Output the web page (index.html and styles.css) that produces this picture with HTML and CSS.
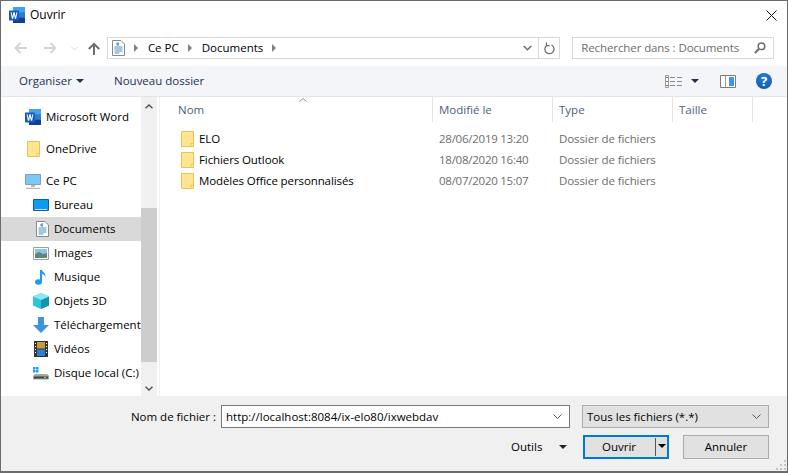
FILE: index.html
```html
<!doctype html>
<html lang="fr">
<head>
<meta charset="utf-8">
<title>Ouvrir</title>
<link rel="stylesheet" href="styles.css">
</head>
<body>

<svg class="sprites" width="0" height="0">
  <symbol id="folder" viewBox="0 0 13 16">
    <path d="M.5 .5h12v15H.5z" fill="#ffe591" stroke="#eac352"/>
    <path d="M10 15.500v-3h2.500" fill="#fff6cf" stroke="#eac352"/>
  </symbol>
  <symbol id="word" viewBox="0 0 16 16">
    <path d="M4 0h12v16H4z" fill="#2b7cd3"/>
    <path d="M4 0h12v5.300H4z" fill="#41a5ee"/>
    <path d="M4 10.700h12V16H4z" fill="#103f91"/>
    <path d="M0 3.500h10v10H0z" fill="#185abd"/>
    <path d="M1.600 5.300l1.300 6.400h1.200L5 8l.9 3.700h1.200l1.300-6.400h-1l-.8 4.200-.9-4.200H4.300l-.9 4.200-.8-4.200z" fill="#fff"/>
  </symbol>
  <symbol id="doc" viewBox="0 0 13 16">
    <path d="M.5 .5h8.500l3.500 3.500v11.500H.5z" fill="#fff" stroke="#8a8a8a"/>
    <path d="M2.500 7h8M2.500 9h8M2.500 11h8M2.500 13h5" stroke="#4a8fc4"/>
    <path d="M6 2v4M4 4h3" stroke="#2f7fd0"/>
  </symbol>
</svg>

<div class="dialog">

  <header class="titlebar">
    <svg class="title-icon" width="16" height="16"><use href="#word"/></svg>
    <span class="title-text">Ouvrir</span>
    <svg class="close" width="11" height="11" viewBox="0 0 11 11"><path d="M.5 .5l10 10M10.500 .5l-10 10" stroke="#111" fill="none"/></svg>
  </header>

  <div class="navbar">
    <div class="nav-buttons">
      <svg width="13" height="12" viewBox="0 0 13 12"><path d="M13 6H2M6.500 1L1.500 6l5 5" stroke="#d4d4d4" stroke-width="1.800" fill="none"/></svg>
      <svg width="13" height="12" viewBox="0 0 13 12"><path d="M0 6h11M6.500 1l5 5-5 5" stroke="#d4d4d4" stroke-width="1.800" fill="none"/></svg>
      <svg width="7" height="5" viewBox="0 0 7 5"><path d="M.5 1l3 3 3-3" stroke="#d4d4d4" fill="none"/></svg>
      <svg width="12" height="13" viewBox="0 0 12 13"><path d="M6 13V2M.8 7L6 1.800 11.200 7" stroke="#6d6d6d" stroke-width="2" fill="none"/></svg>
    </div>
    <div class="address">
      <svg width="13" height="16" class="address-icon"><use href="#doc"/></svg>
      <span class="crumb-sep"></span>
      <span class="crumb">Ce PC</span>
      <span class="crumb-sep"></span>
      <span class="crumb">Documents</span>
      <span class="crumb-sep"></span>
      <svg class="address-drop" width="9" height="6" viewBox="0 0 9 6"><path d="M.7 1l3.800 3.800L8.300 1" stroke="#6d6d6d" stroke-width="1.500" fill="none"/></svg>
      <span class="address-refresh">
        <svg width="11" height="13" viewBox="0 0 11 13"><path d="M3 3.200a4.600 4.600 0 1 0 4.500-.2M2.500 .5v3.200h3.200" stroke="#6d6d6d" stroke-width="1.300" fill="none"/></svg>
      </span>
    </div>
    <div class="search">
      <span>Rechercher dans : Documents</span>
      <svg width="12" height="12" viewBox="0 0 12 12"><circle cx="7.500" cy="4.300" r="3.300" stroke="#6d6d6d" stroke-width="1.500" fill="none"/><path d="M5 6.800L1 11" stroke="#6d6d6d" stroke-width="2"/></svg>
    </div>
  </div>

  <div class="toolbar">
    <span class="tool organise">Organiser</span>
    <span class="caret"></span>
    <span class="tool new-folder">Nouveau dossier</span>
    <svg class="view-icon" width="17" height="13" viewBox="0 0 17 13">
      <path d="M.5 .5h3v12h-3z" fill="#fff" stroke="#9a9a9a"/>
      <path d="M1 2h2v1H1z" fill="#3a7fc0"/><path d="M1 6h2v1H1z" fill="#6a9a50"/><path d="M1 10h2v1H1z" fill="#d05040"/>
      <path d="M5 2.500h5M12 2.500h5M5 6.500h5M12 6.500h5M5 10.500h5M12 10.500h5" stroke="#8b8b8b"/>
    </svg>
    <span class="caret view-caret"></span>
    <svg class="pane-icon" width="16" height="13" viewBox="0 0 16 13">
      <path d="M.5 .5h15v12H.5z" fill="#fff" stroke="#7b7b7b"/>
      <path d="M9 2h5v9H9z" fill="#3b98e6"/>
      <path d="M5.500 1v11" stroke="#9a9a9a"/>
    </svg>
    <span class="help">?</span>
  </div>

  <div class="body">
    <nav class="sidebar">
      <div class="side-row top">
        <svg width="16" height="16"><use href="#word"/></svg>Microsoft Word
      </div>
      <div class="side-row top gap">
        <svg class="icon-folder" width="13" height="16"><use href="#folder"/></svg>OneDrive
      </div>
      <div class="side-row top gap">
        <svg width="16" height="15" viewBox="0 0 16 15"><path d="M.5 .5h15v10H.5z" fill="#7cc8f8" stroke="#8a9aa8"/><path d="M6 11h4v2H6z" fill="#b0b8c0"/><path d="M1 14.300h14" stroke="#a0a8b0"/></svg>Ce PC
      </div>
      <div class="side-row sub">
        <svg width="16" height="12" viewBox="0 0 16 12"><path d="M.5 .5h15v11H.5z" fill="#0e9af0" stroke="#0a5fa8"/><path d="M2 10.500h12" stroke="#bfe6fb"/></svg>Bureau
      </div>
      <div class="side-row sub current">
        <svg class="icon-doc" width="13" height="16"><use href="#doc"/></svg>Documents
      </div>
      <div class="side-row sub">
        <svg width="16" height="13" viewBox="0 0 16 13"><path d="M.5 .5h15v12H.5z" fill="#fff" stroke="#9aa0a8"/><path d="M2 2h12v5H2z" fill="#8cc4ee"/><path d="M2 7l4-2 4 2 4-1v5H2z" fill="#5c8a78"/></svg>Images
      </div>
      <div class="side-row sub">
        <svg width="16" height="16" viewBox="0 0 16 16"><path d="M8 1v12" stroke="#1c9cf0" stroke-width="2" fill="none"/><ellipse cx="5.500" cy="13" rx="3.500" ry="2.800" fill="#1c9cf0"/><path d="M8.500 0c.5 3 4.500 3.500 4 8-.8-2-2.500-3.300-4-3.300z" fill="#1c9cf0"/></svg>Musique
      </div>
      <div class="side-row sub">
        <svg width="16" height="16" viewBox="0 0 16 16"><path d="M8 0l8 3.500v9L8 16l-8-3.500v-9z" fill="#2fc5d8"/><path d="M8 7l8-3.500v9L8 16z" fill="#0f96ae"/><path d="M8 0l8 3.500L8 7 0 3.500z" fill="#8ae6ef"/></svg>Objets 3D
      </div>
      <div class="side-row sub">
        <svg width="16" height="16" viewBox="0 0 16 16"><path d="M5 0h6v8h5l-8 8-8-8h5z" fill="#3c94e0"/></svg>Téléchargement
      </div>
      <div class="side-row sub">
        <svg class="icon-video" width="14" height="16" viewBox="0 0 14 16"><path d="M0 0h14v16H0z" fill="#333"/><path d="M3 1h8v6.500H3z" fill="#c79a3a"/><path d="M3 8.500h8V15H3z" fill="#2f7fd0"/><path d="M1 2h1v1H1zM1 5h1v1H1zM1 8h1v1H1zM1 11h1v1H1zM12 2h1v1h-1zM12 5h1v1h-1zM12 8h1v1h-1zM12 11h1v1h-1z" fill="#fff"/></svg>Vidéos
      </div>
      <div class="side-row sub">
        <svg width="16" height="13" viewBox="0 0 16 13"><path d="M0 0h2.500v2.500H0zM3 0h2.500v2.500H3zM0 3h2.500v2.500H0zM3 3h2.500v2.500H3z" fill="#1ba1e2"/><path d="M2 7h12l2 2v3.500H0V9z" fill="#a2a7ab"/><path d="M1 9.500h14v2H1z" fill="#3c4146"/><path d="M11 10h2v1h-2z" fill="#7de04a"/></svg>Disque local (C:)
      </div>
    </nav>

    <div class="side-scroll">
      <svg width="8" height="5" viewBox="0 0 8 5"><path d="M.5 4.300L4 1l3.500 3.300" stroke="#555" stroke-width="1.500" fill="none"/></svg>
      <div class="thumb"></div>
      <svg class="scroll-down" width="8" height="5" viewBox="0 0 8 5"><path d="M.5 .7L4 4l3.500-3.300" stroke="#555" stroke-width="1.500" fill="none"/></svg>
    </div>

    <main class="files">
      <div class="file-head">
        <svg class="sort-mark" width="8" height="4" viewBox="0 0 8 4"><path d="M.5 3.500l3.500-3 3.500 3" stroke="#8a8a8a" fill="none"/></svg>
        <div class="col col-name">Nom</div>
        <div class="col col-date">Modifié le</div>
        <div class="col col-type">Type</div>
        <div class="col col-size">Taille</div>
      </div>
      <div class="file-row">
        <div class="col-name file-name"><svg width="13" height="16"><use href="#folder"/></svg>ELO</div>
        <div class="col-date file-meta file-date">28/06/2019 13:20</div>
        <div class="col-type file-meta">Dossier de fichiers</div>
      </div>
      <div class="file-row">
        <div class="col-name file-name"><svg width="13" height="16"><use href="#folder"/></svg>Fichiers Outlook</div>
        <div class="col-date file-meta file-date">18/08/2020 16:40</div>
        <div class="col-type file-meta">Dossier de fichiers</div>
      </div>
      <div class="file-row">
        <div class="col-name file-name"><svg width="13" height="16"><use href="#folder"/></svg>Modèles Office personnalisés</div>
        <div class="col-date file-meta file-date">08/07/2020 15:07</div>
        <div class="col-type file-meta">Dossier de fichiers</div>
      </div>
    </main>
  </div>

  <footer class="footer">
    <div class="foot-row">
      <label class="name-label">Nom de fichier :</label>
      <div class="name-input">
        <span>http://localhost:8084/ix-elo80/ixwebdav</span>
        <svg width="9" height="5" viewBox="0 0 9 5"><path d="M.5 .5l4 4 4-4" stroke="#555" fill="none"/></svg>
      </div>
      <div class="type-select">
        <span>Tous les fichiers (*.*)</span>
        <svg width="9" height="5" viewBox="0 0 9 5"><path d="M.5 .5l4 4 4-4" stroke="#555" fill="none"/></svg>
      </div>
    </div>
    <div class="foot-row buttons">
      <span class="tools-label">Outils</span>
      <span class="caret tools-caret"></span>
      <div class="btn btn-open"><span class="btn-open-text">Ouvrir</span><span class="split"></span><span class="caret open-caret"></span></div>
      <div class="btn btn-cancel">Annuler</div>
    </div>
    <svg class="grip" width="10" height="10" viewBox="0 0 10 10"><path d="M8 0h2v2H8zM4 4h2v2H4zM8 4h2v2H8zM0 8h2v2H0zM4 8h2v2H4zM8 8h2v2H8z" fill="#c4c4c4"/></svg>
  </footer>

</div>

</body>
</html>
```

FILE: styles.css
```css
/* ---------- page ---------- */
html,body{margin:0;height:100%}
body{font:11.5px/16px "Open Sans","Noto Sans",sans-serif;color:#000;background:#fff;overflow:hidden}
.sprites{position:absolute}
svg{display:block;flex:none}

.dialog{
  box-sizing:border-box;
  width:788px;height:473px;
  display:flex;flex-direction:column;
  border:1px solid #6b6b6b;
  border-width:1px 1px 2px 1px;
}

/* ---------- title ---------- */
.titlebar{display:flex;align-items:center;height:29px;box-sizing:border-box;padding:0 10px 1px 8px;flex:none}
.title-text{margin-left:5px;font-size:12px}
.close{margin-left:auto}

/* ---------- address row ---------- */
.navbar{display:flex;align-items:center;height:36px;flex:none;padding:0 13px 0 13px}
.nav-buttons{display:flex;align-items:center;width:93px}
.nav-buttons svg:nth-child(2){margin-left:17px}
.nav-buttons svg:nth-child(3){margin-left:14px}
.nav-buttons svg:nth-child(4){margin-left:10px}
.address,.search{
  box-sizing:border-box;height:22px;
  display:flex;align-items:center;
  border:1px solid #d9d9d9;
}
.address{width:454px;padding-left:4px}
.crumb-sep{
  width:0;height:0;margin:0 10px 0 9px;
  border-left:4px solid #7f7f7f;
  border-top:4px solid transparent;border-bottom:4px solid transparent;
}
.address-drop{margin-left:auto;margin-right:6px}
.address-refresh{
  display:flex;align-items:center;justify-content:center;
  width:20px;height:20px;border-left:1px solid #d9d9d9;
}
.search{width:202px;margin-left:12px;padding:0 7px 0 8px;justify-content:space-between;color:#6d6d6d;letter-spacing:-.1px}

/* ---------- toolbar ---------- */
.toolbar{
  display:flex;align-items:center;flex:none;
  height:30px;padding:0 15px 0 18px;
  background:#f3f5f8;color:#1e3150;
}
.caret{
  display:inline-block;width:0;height:0;
  border-top:4px solid #1e3150;
  border-left:4px solid transparent;border-right:4px solid transparent;
}
.organise{width:57px}
.new-folder{margin-left:30px}
.view-icon{margin-left:auto}
.view-caret{margin-left:9px}
.pane-icon{margin-left:21px}
.help{
  width:16px;height:16px;margin-left:20px;border-radius:50%;
  background:radial-gradient(circle at 50% 30%,#2a7fd6,#0c56a8);color:#fff;
  font:bold 13px/16px "Open Sans",sans-serif;text-align:center;
}

/* ---------- body ---------- */
.body{display:flex;flex:1;min-height:0;border-top:1px solid #e5e5e5}

.sidebar{width:140px;flex:none;padding-top:8px;overflow:hidden;white-space:nowrap}
.side-row{display:flex;align-items:center;height:24px}
.side-row.top{padding-left:24px}
.side-row.top svg{margin-right:5px}
.side-row.top .icon-folder{margin-left:2px;margin-right:6px}
.side-row.gap{margin-top:8px}
.side-row.sub{padding-left:32px}
.side-row.sub svg{margin-right:5px}
.side-row.current{background:#d9d9d9}
.side-row.sub .icon-doc{margin-left:3px}
.side-row.sub .icon-video{margin-left:1px;margin-right:6px}

.side-scroll{
  width:16px;flex:none;box-sizing:border-box;
  display:flex;flex-direction:column;align-items:center;
  background:#f0f0f0;padding:7px 0 5px;
  margin-right:2px;
}
.thumb{width:100%;height:154px;margin-top:99px;background:#cdcdcd}
.scroll-down{margin-top:auto}

.files{flex:1;border-left:1px solid #f0f0f0;position:relative}
.file-head{display:flex;height:25px;margin-bottom:6px}
.sort-mark{position:absolute;left:139px;top:1px}
.col{display:flex;align-items:center;color:#4c607a;border-right:1px solid #e5e5e5;box-sizing:border-box;padding-left:6px}
.col-name{width:273px}
.col-date{width:120px}
.col-type{width:120px}
.col-size{width:80px}
.col.col-name{padding-left:18px}

.file-row{display:flex;height:21px;align-items:center;letter-spacing:-.1px}
.file-name{display:flex;align-items:center;padding-left:21px;box-sizing:border-box}
.file-name svg{margin-right:5px}
.file-meta{padding-left:6px;box-sizing:border-box;color:#6d6d6d}
.file-date{letter-spacing:-.25px}

/* ---------- footer ---------- */
.footer{
  flex:none;height:75px;background:#f0f0f0;
  box-sizing:border-box;padding-top:9px;position:relative;
}
.foot-row{display:flex;align-items:center}
.name-label{width:215px;text-align:right;margin-right:5px}
.name-input,.type-select{
  box-sizing:border-box;height:23px;
  display:flex;align-items:center;justify-content:space-between;
  padding:0 7px 0 4px;
}
.name-input{width:349px;background:#fff;border:1px solid #7a7a7a}
.type-select{width:187px;margin-left:12px;background:#e1e1e1;border:1px solid #adadad}

.buttons{margin-top:7px}
.tools-label{margin-left:510px;width:32px}
.caret.tools-caret{margin-left:16px;border-top-color:#222}
.btn{
  box-sizing:border-box;width:86px;height:24px;
  display:flex;align-items:center;justify-content:center;
  background:#e1e1e1;border:1px solid #adadad;
}
.btn-open{margin-left:16px;border:2px solid #0078d7;position:relative}
.btn-open-text{margin-right:14px}
.split{position:absolute;right:11px;top:1px;bottom:1px;width:1px;background:#555}
.caret.open-caret{position:absolute;right:1px;top:7px;border-top-color:#000}
.btn-cancel{margin-left:14px}
.grip{position:absolute;right:1px;bottom:1px}
```
